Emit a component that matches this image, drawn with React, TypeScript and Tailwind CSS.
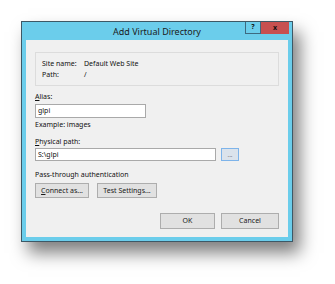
import React from "react";

const font = { fontFamily: '"Noto Sans", "Open Sans", Arial, sans-serif' };

function Btn({ children, className = "" }: { children: React.ReactNode; className?: string }) {
  return (
    <div
      className={
        "flex items-center justify-center border border-[#adadad] bg-[#e1e1e1] text-[7px] text-[#1a1a1a] " +
        className
      }
    >
      {children}
    </div>
  );
}

function App() {
  return (
    <div className="w-[335px] h-[284px] bg-white pl-[21px] pt-[21px]" style={font}>
      <div className="w-[272px] h-[221px] border border-[#3d5866] bg-[#6bcdeb] flex flex-col shadow-[7px_11px_16px_rgba(0,0,0,0.5)]">
        {/* title bar */}
        <div className="relative h-[18px] flex items-center justify-center">
          <span className="text-[9px] text-[#1b1b1b] mt-[1px]">Add Virtual Directory</span>
          <div className="absolute right-[3px] top-0 flex">
            <div className="w-[16px] h-[12px] border border-[#3d6a80] border-t-0 bg-[#6bcdeb] flex items-center justify-center text-[7px] font-bold text-[#111]">
              ?
            </div>
            <div className="w-[28px] h-[12px] bg-[#c75050] flex items-center justify-center text-[7px] font-bold text-[#111]">
              x
            </div>
          </div>
        </div>

        {/* client area */}
        <div className="mx-[4px] h-[197px] bg-[#f0f0f0] px-[9px] pt-[12px] text-[7px] text-[#111] leading-[10px]">
          <div className="h-[34px] border border-[#dcdcdc] pl-[6px] pt-[6px]">
            <div className="flex">
              <span className="w-[42px]">Site name:</span>
              <span>Default Web Site</span>
            </div>
            <div className="flex mt-[1px]">
              <span className="w-[42px]">Path:</span>
              <span>/</span>
            </div>
          </div>

          <div className="mt-[6px]">
            <span className="underline">A</span>lias:
          </div>
          <div className="mt-[2px] w-[111px] h-[14px] border border-[#a9a9a9] bg-white pl-[2px] flex items-center">
            glpi
          </div>
          <div className="mt-[2px]">Example: images</div>

          <div className="mt-[7px]">
            <span className="underline">P</span>hysical path:
          </div>
          <div className="mt-[1px] flex gap-[5px]">
            <div className="w-[181px] h-[13px] border border-[#a9a9a9] bg-white pl-[2px] flex items-center">
              S:\glpi
            </div>
            <div className="w-[18px] h-[13px] border border-[#7eb4ea] bg-[#dbe3ec] flex items-center justify-center text-[6px] text-[#555]">
              ...
            </div>
          </div>

          <div className="mt-[9px]">Pass-through authentication</div>
          <div className="mt-[3px] flex gap-[8px]">
            <Btn className="w-[54px] h-[15px]">
              <span>
                <span className="underline">C</span>onnect as...
              </span>
            </Btn>
            <Btn className="w-[60px] h-[15px]">Test Settings...</Btn>
          </div>

          <div className="mt-[15px] flex justify-end gap-[6px]">
            <Btn className="w-[55px] h-[16px]">OK</Btn>
            <Btn className="w-[58px] h-[16px]">Cancel</Btn>
          </div>
        </div>
      </div>
    </div>
  );
}

export default App;
